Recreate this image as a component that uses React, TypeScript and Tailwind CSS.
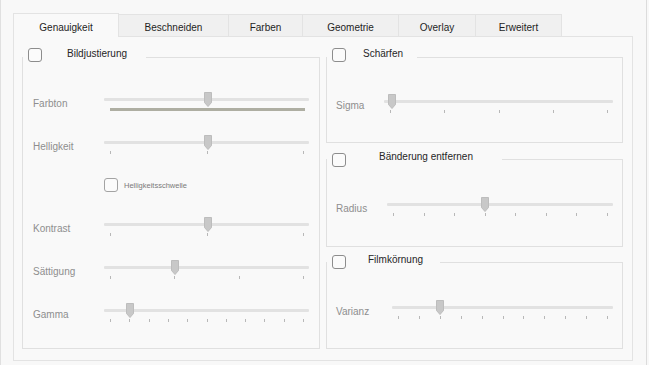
import React from "react";

type SliderProps = { w: number; pos: number; ticks?: number; hue?: boolean };

function Slider({ w, pos, ticks = 0, hue = false }: SliderProps) {
  const xs =
    ticks > 1
      ? Array.from({ length: ticks }, (_, i) => Math.round(6 + (i * (w - 12)) / (ticks - 1)))
      : [];
  return (
    <div className="relative h-[22px] shrink-0" style={{ width: w }}>
      <div className="absolute inset-x-0 top-[6px] h-[3px] rounded-[1px] bg-[#e2e2e2]" />
      {hue && <div className="absolute left-[6px] top-[16px] h-[3px] w-[195px] bg-[#aeaea2]" />}
      {xs.map((x) => (
        <div key={x} className="absolute top-[16px] h-[3px] w-px bg-[#b8b8b8]" style={{ left: x }} />
      ))}
      <svg className="absolute top-0" style={{ left: pos }} width="8" height="15" viewBox="0 0 8 15">
        <path d="M0.5 0.5H7.5V10.5L4 14.5L0.5 10.5Z" fill="#c8c8c8" stroke="#bdbdbd" />
      </svg>
    </div>
  );
}

function Row({
  label,
  lw,
  mt,
  children,
}: {
  label: string;
  lw: string;
  mt: string;
  children: React.ReactNode;
}) {
  return (
    <div className={`flex ${mt}`}>
      <div className={`${lw} shrink-0 pt-[5px] text-[10px] leading-[14px] text-[#8e8e8e]`}>{label}</div>
      {children}
    </div>
  );
}

function Box({ className = "" }: { className?: string }) {
  return (
    <div
      className={`h-[14px] w-[14px] shrink-0 rounded-[3px] border border-[#8d8d8d] bg-[#fbfbfb] ${className}`}
    />
  );
}

function GroupTitle({
  title,
  wrap,
  textCls,
}: {
  title: string;
  wrap: string;
  textCls: string;
}) {
  return (
    <div className={`absolute left-0 flex h-[15px] items-start bg-[#f9f9f9] ${wrap}`}>
      <Box className="ml-[5px]" />
      <span className={`whitespace-nowrap text-[10px] leading-[12px] text-[#262626] ${textCls}`}>{title}</span>
    </div>
  );
}

const tabs = [
  { t: "Beschneiden", w: "w-[110px]" },
  { t: "Farben", w: "w-[74px]" },
  { t: "Geometrie", w: "w-[96px]" },
  { t: "Overlay", w: "w-[77px]" },
  { t: "Erweitert", w: "w-[86px]" },
];

export default function App() {
  return (
    <div className="flex h-[365px] w-[649px] overflow-hidden border-l border-[#e0e0e0] bg-[#f8f8f8] font-['Liberation_Sans',Arial,sans-serif]">
      <div className="h-full w-[646px] shrink-0 border-r border-[#dcdcdc] pl-[12px] pt-[13px]">
        {/* Tabs */}
        <div className="flex h-[23px] items-end">
          <div className="relative z-10 -mb-px flex h-[24px] w-[106px] justify-center border border-b-0 border-[#e3e3e3] bg-[#f9f9f9] pt-[8px] text-[10px] leading-[12px] text-[#1e1e1e]">
            Genauigkeit
          </div>
          {tabs.map((tb) => (
            <div
              key={tb.t}
              className={`flex h-[22px] ${tb.w} justify-center border-r border-t border-[#e3e3e3] bg-[#f0f0f0] pt-[7px] text-[10px] leading-[12px] text-[#1e1e1e]`}
            >
              {tb.t}
            </div>
          ))}
        </div>

        {/* Panel */}
        <div className="grid h-[325px] w-[620px] grid-cols-[298px_297px] gap-x-[6px] border border-[#e3e3e3] bg-[#f9f9f9] pl-[8px] pr-[9px] pt-[20px]">
          {/* Left group */}
          <div className="relative h-[292px] border border-[#e0e0e0] pl-[10px]">
            <GroupTitle title="Bildjustierung" wrap="-top-[10px] w-[123px]" textCls="ml-[25px]" />
            <Row label="Farbton" lw="w-[71px]" mt="mt-[34px]">
              <Slider w={205} pos={100} hue />
            </Row>
            <Row label="Helligkeit" lw="w-[71px]" mt="mt-[21px]">
              <Slider w={205} pos={100} ticks={3} />
            </Row>
            <div className="ml-[71px] mt-[21px] flex items-center">
              <Box className="border-[#a3a3a3]" />
              <span className="ml-[6px] mt-px text-[7.5px] leading-[10px] text-[#7a7a7a]">Helligkeitsschwelle</span>
            </div>
            <Row label="Kontrast" lw="w-[71px]" mt="mt-[25px]">
              <Slider w={205} pos={100} ticks={3} />
            </Row>
            <Row label="Sättigung" lw="w-[71px]" mt="mt-[21px]">
              <Slider w={205} pos={67} ticks={4} />
            </Row>
            <Row label="Gamma" lw="w-[71px]" mt="mt-[21px]">
              <Slider w={205} pos={22} ticks={11} />
            </Row>
          </div>

          {/* Right column */}
          <div className="flex flex-col">
            <div className="relative h-[86px] border border-[#e0e0e0] pl-[9px]">
              <GroupTitle title="Schärfen" wrap="-top-[10px] w-[90px]" textCls="ml-[17px]" />
              <Row label="Sigma" lw="w-[48px]" mt="mt-[36px]">
                <Slider w={229} pos={4} ticks={5} />
              </Row>
            </div>
            <div className="relative mt-[16px] h-[88px] border border-[#e0e0e0] pl-[9px]">
              <GroupTitle title="Bänderung entfernen" wrap="-top-[7px] w-[175px]" textCls="ml-[33px] -mt-[2px]" />
              <Row label="Radius" lw="w-[51px]" mt="mt-[37px]">
                <Slider w={226} pos={94} ticks={8} />
              </Row>
            </div>
            <div className="relative mt-[15px] h-[87px] border border-[#e0e0e0] pl-[9px]">
              <GroupTitle title="Filmkörnung" wrap="-top-[8px] w-[113px]" textCls="ml-[22px] -mt-px" />
              <Row label="Varianz" lw="w-[56px]" mt="mt-[37px]">
                <Slider w={221} pos={44} ticks={11} />
              </Row>
            </div>
          </div>
        </div>
      </div>
    </div>
  );
}
